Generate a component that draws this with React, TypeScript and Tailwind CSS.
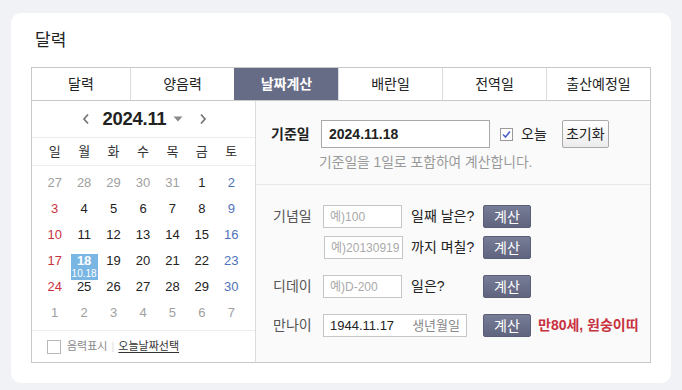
import React from "react";

const FONT = { fontFamily: '"Liberation Sans", "Noto Sans CJK KR", sans-serif' };

const tabs = ["달력", "양음력", "날짜계산", "배란일", "전역일", "출산예정일"];
const weekdays = ["일", "월", "화", "수", "목", "금", "토"];

type Day = { d: number; muted?: boolean };
const days: Day[] = [
  { d: 27, muted: true }, { d: 28, muted: true }, { d: 29, muted: true }, { d: 30, muted: true }, { d: 31, muted: true }, { d: 1 }, { d: 2 },
  { d: 3 }, { d: 4 }, { d: 5 }, { d: 6 }, { d: 7 }, { d: 8 }, { d: 9 },
  { d: 10 }, { d: 11 }, { d: 12 }, { d: 13 }, { d: 14 }, { d: 15 }, { d: 16 },
  { d: 17 }, { d: 18 }, { d: 19 }, { d: 20 }, { d: 21 }, { d: 22 }, { d: 23 },
  { d: 24 }, { d: 25 }, { d: 26 }, { d: 27 }, { d: 28 }, { d: 29 }, { d: 30 },
  { d: 1, muted: true }, { d: 2, muted: true }, { d: 3, muted: true }, { d: 4, muted: true }, { d: 5, muted: true }, { d: 6, muted: true }, { d: 7, muted: true },
];

function CalcButton() {
  return (
    <button className="w-[48px] h-[23px] rounded-[2px] border border-[#5a5e76] bg-gradient-to-b from-[#777c97] to-[#60647e] text-white text-[14px] leading-none">
      계산
    </button>
  );
}

function SmallInput({ placeholder, w = "w-[79px]" }: { placeholder: string; w?: string }) {
  return (
    <div className={`${w} h-[23px] border border-[#c6c6c6] bg-white flex items-center px-[6px] text-[12px] text-[#aaa]`}>
      {placeholder}
    </div>
  );
}

export default function App() {
  return (
    <div className="min-h-screen bg-[#f1f2f6] pt-[13px] px-[11px]" style={FONT}>
      <div className="bg-white rounded-[10px] h-[370px] px-[20px] pt-[17px]">
        <h1 className="text-[17px] leading-[22px] text-[#222] pl-[4px]">달력</h1>
        <div className="mt-[15px] w-[620px]">
          {/* tabs */}
          <div className="flex h-[33px] border border-[#c8c8c8] border-b-0">
            {tabs.map((t, i) => (
              <div
                key={t}
                className={`${i === 0 ? "w-[98px]" : "w-[104px]"} ${i > 0 ? "border-l border-[#dcdcdc]" : ""} flex items-center justify-center text-[14px] ${
                  i === 2 ? "bg-[#666b86] text-white font-bold border-l-[#666b86]" : "text-[#222]"
                }`}
              >
                {t}
              </div>
            ))}
          </div>
          {/* body */}
          <div className="flex h-[263px] border border-[#c8c8c8]">
            {/* left calendar */}
            <div className="w-[224px] border-r border-[#dcdcdc] flex flex-col">
              <div className="h-[37px] border-b border-[#ececec] flex items-center justify-center pl-[2px]">
                <svg width="8" height="12" viewBox="0 0 8 12">
                  <path d="M6 1.5 L2 6 L6 10.5" fill="none" stroke="#777" strokeWidth="1.8" />
                </svg>
                <span className="ml-[13px] text-[18.5px] font-bold text-[#222] tracking-[-0.3px]">2024.11</span>
                <svg width="10" height="6" viewBox="0 0 10 6" className="ml-[7px]">
                  <path d="M0.5 0.5 L9.5 0.5 L5 5.5 Z" fill="#8a8a8a" />
                </svg>
                <svg width="8" height="12" viewBox="0 0 8 12" className="ml-[16px]">
                  <path d="M2 1.5 L6 6 L2 10.5" fill="none" stroke="#777" strokeWidth="1.8" />
                </svg>
              </div>
              <div className="h-[28px] border-b border-[#ececec] px-[8px] flex items-center">
                <div className="grid grid-cols-7 w-[206px] text-[13px] text-[#333] text-center">
                  {weekdays.map((w) => (
                    <span key={w}>{w}</span>
                  ))}
                </div>
              </div>
              <div className="px-[8px] pt-[4px] h-[165px] border-b border-[#ececec]">
                <div className="grid grid-cols-7 w-[206px] text-[13px] text-center">
                  {days.map((day, idx) => {
                    const col = idx % 7;
                    if (!day.muted && day.d === 18) {
                      return (
                        <div key={idx} className="h-[26px] flex justify-center items-start">
                          <div className="w-[27px] h-[26px] mt-[6px] bg-[#79b6e3] text-white flex flex-col items-center">
                            <span className="text-[13px] leading-[14px] font-bold">18</span>
                            <span className="text-[10px] leading-[12px]">10.18</span>
                          </div>
                        </div>
                      );
                    }
                    const color = day.muted
                      ? "text-[#a0a0a0]"
                      : col === 0
                      ? "text-[#c8323f]"
                      : col === 6
                      ? "text-[#4f73b8]"
                      : "text-[#222]";
                    return (
                      <div key={idx} className={`h-[26px] leading-[26px] ${color}`}>
                        {day.d}
                      </div>
                    );
                  })}
                </div>
              </div>
              <div className="flex-1 flex items-center pl-[15px] text-[11px]">
                <span className="w-[14px] h-[14px] border border-[#b8b8b8] bg-white mr-[6px]" />
                <span className="text-[#888]">음력표시</span>
                <span className="mx-[4px] text-[#ddd] text-[11px]">|</span>
                <span className="text-[#333] underline underline-offset-2">오늘날짜선택</span>
              </div>
            </div>
            {/* right */}
            <div className="flex-1 bg-[#fafafa] flex flex-col">
              <div className="h-[84px] border-b border-[#e8e8e8] pl-[15px] pt-[19px]">
                <div className="flex items-center">
                  <span className="w-[50px] text-[14px] font-bold text-[#222]">기준일</span>
                  <div className="w-[169px] h-[28px] border border-[#a9a9a9] bg-white flex items-center px-[7px] text-[14px] font-bold text-[#222]">
                    2024.11.18
                  </div>
                  <span className="ml-[10px] w-[13px] h-[13px] border border-[#9a9a9a] bg-white flex items-center justify-center">
                    <svg width="9" height="9" viewBox="0 0 9 9">
                      <path d="M1 4.5 L3.5 7 L8 1.5" fill="none" stroke="#4b63c6" strokeWidth="1.6" />
                    </svg>
                  </span>
                  <span className="ml-[8px] text-[14px] text-[#222]">오늘</span>
                  <button className="ml-[15px] w-[47px] h-[28px] border border-[#a9a9a9] rounded-[2px] bg-gradient-to-b from-[#ffffff] to-[#ececec] text-[14px] text-[#222]">
                    초기화
                  </button>
                </div>
                <div className="mt-[5px] pl-[48px] text-[13.8px] text-[#999]">기준일을 1일로 포함하여 계산합니다.</div>
              </div>
              <div className="pl-[17px] pt-[20px] flex flex-col text-[14px]">
                <div className="flex items-center h-[23px]">
                  <span className="w-[50px] text-[#555]">기념일</span>
                  <SmallInput placeholder="예)100" />
                  <span className="ml-[9px] w-[72px] text-[#222]">일째 날은?</span>
                  <CalcButton />
                </div>
                <div className="flex items-center h-[23px] mt-[8px]">
                  <span className="w-[51px]" />
                  <SmallInput placeholder="예)20130919" />
                  <span className="ml-[8px] w-[72px] text-[#222]">까지 며칠?</span>
                  <CalcButton />
                </div>
                <div className="flex items-center h-[23px] mt-[16px]">
                  <span className="w-[50px] text-[#555]">디데이</span>
                  <SmallInput placeholder="예)D-200" />
                  <span className="ml-[9px] w-[72px] text-[#222]">일은?</span>
                  <CalcButton />
                </div>
                <div className="flex items-center h-[23px] mt-[16px]">
                  <span className="w-[50px] text-[#555]">만나이</span>
                  <div className="w-[144px] h-[23px] border border-[#c6c6c6] bg-white flex items-center px-[6px] text-[13px] text-[#222]">
                    <span>1944.11.17</span>
                    <span className="ml-auto text-[#888]">생년월일</span>
                  </div>
                  <span className="w-[16px]" />
                  <CalcButton />
                  <span className="ml-[7px] text-[14px] font-bold text-[#c8323f]">만80세, 원숭이띠</span>
                </div>
              </div>
            </div>
          </div>
        </div>
      </div>
    </div>
  );
}
